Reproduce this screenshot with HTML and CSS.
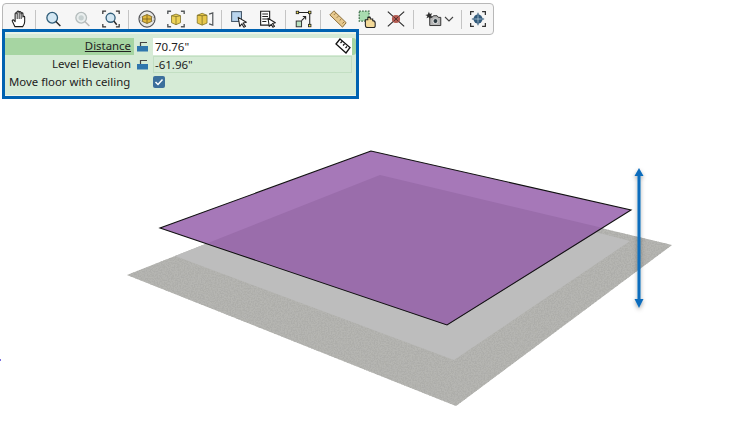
FILE: index.html
```html
<!DOCTYPE HTML>
<html>
<head>
	<title>Move floor with ceiling</title>
	<meta http-equiv="Content-Type" content="text/html; charset=UTF-8">
	<link rel="stylesheet" href="styles.css">
</head>
<body>

	<div class="toolbar">
		<span class="btn"><svg viewBox="1 1 18 20"><path d="M5.500 19.500 2.600 13.600c-.6-1.300 1-2.200 1.900-1.100l1.200 1.400V5.200c0-1.500 2-1.500 2.100 0V3.300c0-1.500 2.200-1.500 2.200 0v.5c0-1.500 2.200-1.500 2.200 0v1.400c0-1.400 2.200-1.400 2.200 0v3.600c0-1.200 1.900-1.200 1.900 0V14c0 2.500-1 4-2.200 5.500z" fill="#fff" stroke="#1a1a1a" stroke-width="1.200" stroke-linejoin="round"/><path d="M8 5v6M10.200 3.800V11M12.400 5.200V11" stroke="#1a1a1a" fill="none"/></svg></span>
		<span class="sep"></span>
		<span class="btn"><svg viewBox="0 0 22 22"><circle cx="10" cy="9.500" r="6.500" fill="#d3e7f3" stroke="#2f5d79" stroke-width="1.600"/><path d="M14.500 14 20 19.500" stroke="#2b2b2b" stroke-width="1.800"/></svg></span>
		<span class="btn"><svg viewBox="0 0 22 22"><circle cx="10" cy="9.500" r="6.500" fill="#e9eeee" stroke="#b4bcbc" stroke-width="1.600"/><circle cx="10" cy="9.500" r="3.200" fill="#c6d0d0"/><path d="M14.500 14 20 19.500" stroke="#b8b8b8" stroke-width="1.800"/></svg></span>
		<span class="btn"><svg viewBox="0 0 22 22"><path d="M1 5V1.500H5M17 1.500H21V5M1 17V20.500H5M17 20.500H21V17" fill="none" stroke="#333" stroke-width="1.500"/><circle cx="10.500" cy="9.500" r="5.500" fill="#d3e7f3" stroke="#2f5d79" stroke-width="1.600"/><path d="M14.500 13.500 18 18" stroke="#2b2b2b" stroke-width="1.800"/></svg></span>
		<span class="sep wide"></span>
		<span class="btn"><svg viewBox="0 0 22 22"><circle cx="11" cy="11" r="9.800" fill="#e9e9e6" stroke="#55565a" stroke-width="1.500"/><ellipse cx="11" cy="11" rx="9" ry="4" fill="none" stroke="#9a9a9a" stroke-width=".8"/><path d="M11 5.500 16.500 8V14L11 16.500 5.500 14V8z" fill="#e3b93c" stroke="#6d5a20" stroke-width=".9"/><path d="M5.500 11H16.500M11 5.500V16.500" stroke="#6d5a20" stroke-width=".9"/></svg></span>
		<span class="btn"><svg viewBox="0 0 22 22"><path d="M1 5V1.500H5M17 1.500H21V5M1 17V20.500H5M17 20.500H21V17" fill="none" stroke="#55595c" stroke-width="1.700"/><path d="M5.500 7 11 5 16.500 7V15.500L11 18 5.500 15.500z" fill="#ecd257" stroke="#77691f" stroke-width=".9"/><path d="M11 8V18M5.500 7 11 8 16.500 7" stroke="#77691f" stroke-width=".9" fill="none"/></svg></span>
		<span class="btn"><svg viewBox="0 0 22 22"><path d="M1.500 6.500 7.500 4 13.500 6.500V16L7.500 18.500 1.500 16z" fill="#e8c84c" stroke="#77691f" stroke-width=".9"/><path d="M7.500 7V18.500M1.500 6.500 7.500 7 13.500 6.500" stroke="#77691f" stroke-width=".9" fill="none"/><path d="M16 5 20.500 3.500V18.500L16 17" fill="none" stroke="#55595c" stroke-width="1.500"/></svg></span>
		<span class="sep"></span>
		<span class="btn"><svg viewBox="0 0 22 22"><rect x="2" y="2" width="12" height="12" fill="#b9d5ee" stroke="#45586a" stroke-width="1.300"/><path d="M10 9 20 15 16 16 19 20 17 21 14.500 17 12 20z" fill="#fff" stroke="#222" stroke-width="1.300" stroke-linejoin="round"/></svg></span>
		<span class="btn"><svg viewBox="0 0 22 22"><path d="M2 1.500H13V18.500H2z" fill="#fff" stroke="#222" stroke-width="1.400"/><path d="M4 5H11M4 8H11M4 11H11M4 14H9" stroke="#222" stroke-width="1.300"/><path d="M11 10 20 15.500 16.500 16.500 19 20 17 21 15 17.500 12.500 20z" fill="#fff" stroke="#222" stroke-width="1.300" stroke-linejoin="round"/></svg></span>
		<span class="sep wide"></span>
		<span class="btn"><svg viewBox="0 0 22 22"><path d="M3 3H18V19" fill="none" stroke="#222" stroke-width="1.300"/><rect x="1.500" y="1.500" width="3" height="3" fill="#f2e24c" stroke="#222"/><rect x="16.500" y="1.500" width="3" height="3" fill="#f2e24c" stroke="#222"/><rect x="16.500" y="17.500" width="3" height="3" fill="#f2e24c" stroke="#222"/><rect x="1.500" y="13.500" width="6.500" height="7" fill="#b9e0c0" stroke="#333" stroke-width="1.200"/><path d="M8 13 13 8M9.500 8H13V11.500" fill="none" stroke="#222" stroke-width="1.300"/></svg></span>
		<span class="sep"></span>
		<span class="btn"><svg viewBox="0 0 22 22"><path d="M6 1 21 15.500 16.500 21 1 6z" fill="#e6c88e" stroke="#8a6d3a" stroke-width="1.200"/><path d="M6 6 8 4M9.500 9.500 11.500 7.500M13 13 15 11M16.500 16.500 18.500 14.500" stroke="#8a6d3a" stroke-width="1.100"/></svg></span>
		<span class="btn"><svg viewBox="0 0 22 22"><rect x="1.500" y="1.500" width="12" height="12" fill="#a8dcb0" stroke="#3d6d4a" stroke-width="1.500" stroke-dasharray="2 1.500"/><path d="M9 12h3V9h3v2h3v2c2 0 3 1 3 3v4c0 1-1 1.500-2 1.500H12c-2 0-3-1-3-3z" fill="#f3d998" stroke="#222" stroke-width="1.300"/></svg></span>
		<span class="btn"><svg viewBox="0 0 22 22"><path d="M1 2 21 20M21 2 1 20" stroke="#2c2c2c" stroke-width="1.400"/><circle cx="11" cy="11" r="5" fill="#b35a50"/><path d="M8 8 14 14M14 8 8 14" stroke="#4c3030" stroke-width="1.100"/></svg></span>
		<span class="sep wide"></span>
		<span class="btn cam"><svg viewBox="0 0 22 22"><path d="M7 9H10L11.500 7H16L17.500 9H20.500V19H7z" fill="#b5b5b5" stroke="#333" stroke-width="1.200"/><circle cx="14" cy="13.500" r="3" fill="#2c3a40" stroke="#fff" stroke-width=".9"/><path d="M6 2 7.200 5 10 4 8.500 6.800 11 8 8 8.500 7.500 11 5.800 9 3 10 4.200 7.300 1.500 6 4.500 5.500z" fill="#2d2d2d"/></svg></span>
		<span class="btn chev"><svg viewBox="0 0 10 6"><path d="M1 1 5 5 9 1" fill="none" stroke="#444" stroke-width="1.100"/></svg></span>
		<span class="sep last"></span>
		<span class="btn end"><svg viewBox="0 0 22 22"><path d="M2 6V2H6M16 2H20V6M2 16V20H6M16 20H20V16" fill="none" stroke="#333" stroke-width="1.500"/><circle cx="11" cy="11" r="5.500" fill="#30597a"/><path d="M11 3.500V18.500M3.500 11H18.500" stroke="#30597a" stroke-width="1.300"/><path d="M11 6.500V15.500M6.500 11H15.500" stroke="#b9d0e0" stroke-width=".9"/></svg></span>
	</div>

	<div class="panel">
		<div class="row">
			<div class="label active">Distance</div>
			<span class="lock"><svg width="11" height="11" viewBox="0 0 11 11"><path d="M3.500 5V1.500H10" fill="none" stroke="#444" stroke-width="1.200"/><rect x="0" y="5" width="11" height="5.500" fill="#2f76ad"/></svg></span>
			<div class="field current">70.76"
				<span class="pick"><svg width="16" height="16" viewBox="0 0 16 16"><path d="M5 1 15 9.500 11 15 1 6z" fill="#fff" stroke="#111" stroke-width="1.300"/><path d="M5.500 5 7 3.500M8 7.500 9.500 6M10.500 10 12 8.500" stroke="#111" stroke-width="1.200"/></svg></span>
			</div>
			<span class="grip"></span>
		</div>
		<div class="row">
			<div class="label">Level Elevation</div>
			<span class="lock"><svg width="11" height="11" viewBox="0 0 11 11"><path d="M3.500 5V1.500H10" fill="none" stroke="#444" stroke-width="1.200"/><rect x="0" y="5" width="11" height="5.500" fill="#2f76ad"/></svg></span>
			<div class="field">-61.96"</div>
		</div>
		<div class="row">
			<div class="label left">Move floor with ceiling</div>
			<span class="lock"></span>
			<div class="check"><svg width="12" height="12" viewBox="0 0 12 12"><path d="M2.500 6 5 8.500 9.500 3.500" fill="none" stroke="#fff" stroke-width="1.500"/></svg></div>
		</div>
	</div>

	<svg class="scene" width="731" height="392" viewBox="0 35 731 392">
		<defs>
			<filter id="noise" x="0" y="0" width="100%" height="100%">
				<feTurbulence type="fractalNoise" baseFrequency="0.7" numOctaves="2" seed="4" result="grain"/>
				<feColorMatrix in="grain" type="matrix" values="0 0 0 0 .42  0 0 0 0 .42  0 0 0 0 .40  3.500 0 0 0 -1.300" result="dots"/>
				<feComposite in="dots" in2="SourceAlpha" operator="in" result="clipped"/>
				<feMerge><feMergeNode in="SourceGraphic"/><feMergeNode in="clipped"/></feMerge>
			</filter>
			<filter id="glow" x="-300%" y="-5%" width="700%" height="115%">
				<feDropShadow dx="0" dy="2" stdDeviation="2" flood-color="#000" flood-opacity=".35"/>
			</filter>
		</defs>
		<rect x="0" y="359" width="1" height="2" fill="#7a6ee0"/>
		<polygon points="127,275 380,175 672,245 456,406" fill="#b6b6b2" filter="url(#noise)"/>
		<polygon points="175,256 380,176 630,241 454,360" fill="#bdbdbd"/>
		<polygon points="371,151 160,228 447,325 631,210" fill="#a678b8"/>
		<polygon points="380,175 208,243 447,325 603,228" fill="#9a6dab"/>
		<polygon points="371,151 160,228 447,325 631,210" fill="none" stroke="#111" stroke-width="1.100"/>
		<g filter="url(#glow)">
			<path d="M639 172V304" stroke="#0a6cbc" stroke-width="3"/>
			<path d="M639 168 643.500 176H634.500z" fill="#0a6cbc"/>
			<path d="M639 308 643.500 299H634.500z" fill="#0a6cbc"/>
		</g>
	</svg>

</body>
</html>
```

FILE: styles.css
```css
body {
	margin: 0;
	background-color: #fff;
	font-family: "Noto Sans", "Open Sans", sans-serif;
	overflow: hidden;
}

.scene { display: block; }

.toolbar {
	display: flex;
	align-items: center;
	box-sizing: border-box;
	width: 492px;
	height: 32px;
	margin: 3px 0 0 2px;
	padding-left: 1px;
	background-color: #f6f6f6;
	border: 1px solid #b8b8b8;
	border-radius: 4px;
}

.btn {
	display: flex;
	align-items: center;
	justify-content: center;
	width: 29px;
	height: 22px;
}

.btn svg {
	width: 18px;
	height: 18px;
}

.btn.cam { width: 25px; margin-left: 3px; }
.btn.chev { width: 8px; }
.btn.chev svg { width: 10px; height: 6px; flex: none; }
.btn.end { width: 26px; }

.sep {
	width: 1px;
	height: 19px;
	margin: 0 2px;
	background-color: #c4c4c4;
}

.sep.wide { margin: 0 3px; }
.sep.last { margin: 0 3px 0 8px; }

.panel {
	position: absolute;
	top: 29px;
	left: 2px;
	box-sizing: border-box;
	width: 357px;
	height: 70px;
	padding: 5px 0 0 0;
	background-color: #d6ebd6;
	border: 3px solid #0062b1;
	box-shadow: inset 0 2px 0 #e8f3e8, inset 0 -1px 0 #eef6ee;
	font-size: 11.400px;
	color: #222;
}

.row {
	display: flex;
	align-items: center;
	height: 18px;
}

.label {
	box-sizing: border-box;
	width: 129px;
	height: 17px;
	padding-right: 3px;
	line-height: 15px;
	text-align: right;
	white-space: nowrap;
}

.label.active {
	background-color: #a6d5a2;
	text-decoration: underline;
}

.label.left {
	padding-left: 4px;
	text-align: left;
}

.lock {
	display: flex;
	align-items: center;
	justify-content: center;
	width: 19px;
	padding-right: 2px;
	box-sizing: border-box;
}

.field {
	display: flex;
	align-items: center;
	justify-content: space-between;
	box-sizing: border-box;
	width: 199px;
	height: 17px;
	padding-left: 1px;
	border: 1px solid #c3dfc3;
	font-size: 11.500px;
	line-height: 13px;
}

.field.current {
	background-color: #fff;
	border-color: #fff;
}

.pick {
	display: flex;
}

.grip {
	width: 4px;
	height: 17px;
	background-color: #a6d5a2;
	border-radius: 0 3px 3px 0;
}

.check {
	display: flex;
	align-items: center;
	justify-content: center;
	width: 12px;
	height: 12px;
	background-color: #3c6f9c;
	border-radius: 2px;
}
```
